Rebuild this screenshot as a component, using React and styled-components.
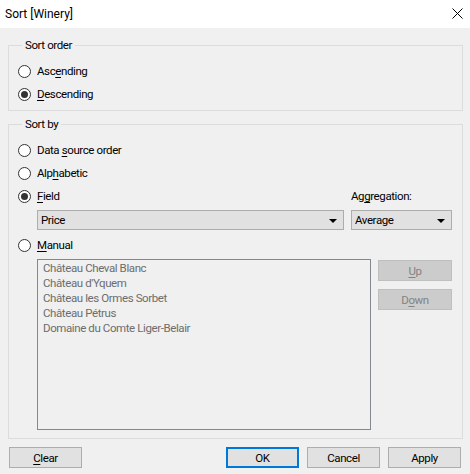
import React from 'react';
import styled, { createGlobalStyle } from 'styled-components';

const GlobalStyle = createGlobalStyle`
  html, body {
    margin: 0;
    padding: 0;
    background: #f0f0f0;
  }
  body {
    font-family: 'Roboto', 'Liberation Sans', sans-serif;
    font-size: 11.5px;
    letter-spacing: -0.4px;
    color: #000000;
  }
`;

const Window = styled.div`
  width: 470px;
  height: 474px;
  background: #f0f0f0;
  display: flex;
  flex-direction: column;
  overflow: hidden;
`;

const TitleBar = styled.div`
  height: 28px;
  background: #ffffff;
  display: flex;
  align-items: center;
  justify-content: space-between;
  padding: 0 7px 0 5px;
  box-sizing: border-box;
`;

const Title = styled.div`
  font-size: 12px;
  letter-spacing: 0;
  line-height: 16px;
  margin-top: -1px;
`;

const CloseIcon = styled.svg`
  width: 11px;
  height: 11px;
  margin-top: -1px;
`;

const Group = styled.fieldset`
  margin: ${p => p.$top}px 7px 0 8px;
  padding: 7px 10px 4px 9px;
  border: 1px solid #dcdcdc;
  min-width: 0;
`;

const Legend = styled.legend`
  margin-left: 4px;
  padding: 0 3px;
  line-height: 16px;
`;

const RadioRow = styled.label`
  display: flex;
  align-items: center;
  height: 23px;
  gap: 6px;
`;

const RadioText = styled.span`
  margin-top: -1px;
`;

const RadioCircle = styled.span`
  width: 13px;
  height: 13px;
  box-sizing: border-box;
  border-radius: 50%;
  border: 1px solid #333333;
  background: #ffffff;
  display: flex;
  align-items: center;
  justify-content: center;
  flex: none;
  &::after {
    content: "";
    width: 7px;
    height: 7px;
    border-radius: 50%;
    background: ${p => (p.$checked ? '#333333' : 'transparent')};
  }
`;

const Key = styled.u`
  text-decoration: underline;
  text-underline-offset: 2px;
`;

const FieldRow = styled.div`
  display: grid;
  grid-template-columns: 1fr 101px;
  column-gap: 8px;
  align-items: center;
`;

const AggLabel = styled.div`
  height: 23px;
  display: flex;
  align-items: center;
  margin-top: -1px;
`;

const SelectRow = styled.div`
  display: grid;
  grid-template-columns: 307px 101px;
  column-gap: 7px;
  margin: 2px 0 4px 19px;
`;

const Select = styled.div`
  height: 20px;
  box-sizing: border-box;
  background: #e1e1e1;
  border: 1px solid #adadad;
  display: flex;
  align-items: center;
  justify-content: space-between;
  padding: 0 6px 0 3px;
`;

const Arrow = styled.span`
  width: 0;
  height: 0;
  border-left: 4px solid transparent;
  border-right: 4px solid transparent;
  border-top: 4px solid #000000;
  margin-top: 1px;
`;

const ManualArea = styled.div`
  display: flex;
  gap: 7px;
  margin: 2px 0 4px 19px;
`;

const ListBox = styled.div`
  width: 334px;
  height: 171px;
  box-sizing: border-box;
  border: 1px solid #828790;
  padding: 1px 5px;
  color: #6d6d6d;
`;

const ListItem = styled.div`
  line-height: 15px;
  white-space: nowrap;
`;

const SideButtons = styled.div`
  display: flex;
  flex-direction: column;
  gap: 8px;
  padding-top: 1px;
`;

const Button = styled.button`
  width: 73px;
  height: 21px;
  box-sizing: border-box;
  margin: 0;
  padding: 0;
  font-family: inherit;
  font-size: 11.5px;
  letter-spacing: inherit;
  color: ${p => (p.disabled ? '#838383' : '#000000')};
  background: ${p => (p.disabled ? '#cccccc' : '#e1e1e1')};
  border: ${p => (p.$primary ? '2px solid #0078d7' : p.disabled ? '1px solid #bfbfbf' : '1px solid #adadad')};
`;

const SideButton = styled(Button)`
  width: 74px;
`;

const Footer = styled.div`
  display: flex;
  gap: 8px;
  padding: 8px 9px 0 9px;
`;

const Spacer = styled.div`
  flex: 1;
`;

const Radio = ({ checked, children }) => (
  <RadioRow>
    <RadioCircle $checked={checked} />
    <RadioText>{children}</RadioText>
  </RadioRow>
);

const wineries = [
  'Château Cheval Blanc',
  "Château d'Yquem",
  'Château les Ormes Sorbet',
  'Château Pétrus',
  'Domaine du Comte Liger-Belair',
];

export default function App() {
  return (
    <Window>
      <GlobalStyle />
      <TitleBar>
        <Title>Sort [Winery]</Title>
        <CloseIcon viewBox="0 0 11 11">
          <path d="M0.5 0.5 L10.5 10.5 M10.5 0.5 L0.5 10.5" stroke="#000" strokeWidth="1" fill="none" />
        </CloseIcon>
      </TitleBar>

      <Group $top={9}>
        <Legend>Sort order</Legend>
        <Radio>Asc<Key>e</Key>nding</Radio>
        <Radio checked><Key>D</Key>escending</Radio>
      </Group>

      <Group $top={5}>
        <Legend>Sort by</Legend>
        <Radio>Data <Key>s</Key>ource order</Radio>
        <Radio>Alp<Key>h</Key>abetic</Radio>
        <FieldRow>
          <Radio checked><Key>F</Key>ield</Radio>
          <AggLabel>Ag<Key>g</Key>regation:</AggLabel>
        </FieldRow>
        <SelectRow>
          <Select>Price<Arrow /></Select>
          <Select>Average<Arrow /></Select>
        </SelectRow>
        <Radio><Key>M</Key>anual</Radio>
        <ManualArea>
          <ListBox>
            {wineries.map(w => <ListItem key={w}>{w}</ListItem>)}
          </ListBox>
          <SideButtons>
            <SideButton disabled><Key>U</Key>p</SideButton>
            <SideButton disabled>D<Key>o</Key>wn</SideButton>
          </SideButtons>
        </ManualArea>
      </Group>

      <Footer>
        <Button><Key>C</Key>lear</Button>
        <Spacer />
        <Button $primary>OK</Button>
        <Button>Cancel</Button>
        <Button>Apply</Button>
      </Footer>
    </Window>
  );
}
